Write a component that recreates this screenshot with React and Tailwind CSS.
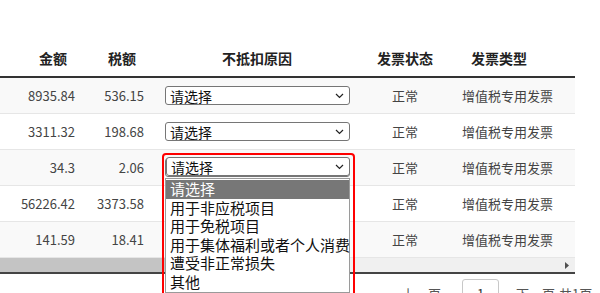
export default function App() {
  const rows = [
    ['8935.84', '536.15'],
    ['3311.32', '198.68'],
    ['34.3', '2.06'],
    ['56226.42', '3373.58'],
    ['141.59', '18.41'],
  ];
  const options = ['请选择', '用于非应税项目', '用于免税项目', '用于集体福利或者个人消费', '遭受非正常损失', '其他'];

  const Chevron = () => (
    <svg width="9" height="6" viewBox="0 0 9 6" className="shrink-0">
      <path d="M1 1 L4.5 4.5 L8 1" fill="none" stroke="#222" strokeWidth="1.2" />
    </svg>
  );

  const Select = () => (
    <div className="flex h-[19px] w-[185px] items-center justify-between rounded-[3px] border border-[#767676] bg-white pl-[4px] pr-[5px] text-[14px] leading-none text-[#111]">
      <span>请选择</span>
      <Chevron />
    </div>
  );

  return (
    <div className="relative h-[293px] w-[600px] overflow-hidden bg-white font-['Noto_Sans_CJK_SC',sans-serif]">
      <div className="w-[575px] pt-[40px]">
        <div className="flex h-[38px] items-center border-b-2 border-[#333] text-[14px] font-bold text-[#222]">
          <div className="w-[85px] pr-[18px] text-right">金额</div>
          <div className="w-[69px] pr-[18px] text-right">税额</div>
          <div className="w-[206px] text-center">不抵扣原因</div>
          <div className="w-[90px] text-center">发票状态</div>
          <div className="w-[125px] pl-[21px]">发票类型</div>
        </div>
        {rows.map((r, i) => (
          <div
            key={i}
            className={`flex h-[36px] items-center border-b border-[#e6e6e6] text-[13px] text-[#444] ${i % 2 === 0 ? 'bg-[#f9f9f9]' : 'bg-white'}`}
          >
            <div className="w-[85px] pr-[10px] text-right">{r[0]}</div>
            <div className="w-[69px] pr-[10px] text-right">{r[1]}</div>
            <div className="w-[206px] pl-[11px]">
              <Select />
            </div>
            <div className="w-[90px] text-center">正常</div>
            <div className="w-[125px] pl-[12px]">增值税专用发票</div>
          </div>
        ))}
        <div className="flex h-[14px] items-stretch">
          <div className="w-[350px] bg-[#c4c4c4]" />
          <div className="flex flex-1 items-center justify-end bg-[#f0f0f0] pr-[6px]">
            <svg width="4" height="7" viewBox="0 0 4 7">
              <path d="M0 0 L4 3.5 L0 7 Z" fill="#505050" />
            </svg>
          </div>
        </div>
        <div className="h-[2px] bg-[#444]" />
      </div>

      <div className="mt-[5px] flex items-start text-[13px] text-[#555]">
        <div className="w-[402px]" />
        <div className="pt-[7px] leading-[16px]">上一页</div>
        <div className="ml-[21px] flex h-[28px] w-[37px] items-start justify-center rounded-[3px] border border-[#c8c8c8] pt-[6px] leading-[16px] text-[#333]">
          1
        </div>
        <div className="ml-[17px] pt-[7px] leading-[16px]">下一页</div>
        <div className="ml-[4px] pt-[7px] leading-[16px]">共1页</div>
      </div>

      <div className="absolute left-[162px] top-[153px] h-[160px] w-[193px] rounded-[4px] border-2 border-[#ff0000]">
        <div className="ml-[2px] mt-[2px]">
          <div className="flex h-[19px] w-[184px] items-center justify-between rounded-[3px] border border-[#767676] bg-white pl-[4px] pr-[5px] text-[14px] leading-none text-[#111]">
            <span>请选择</span>
            <Chevron />
          </div>
        </div>
        <div className="ml-[1px] mt-[2px] w-[185px] border border-[#9a9a9a] bg-white pt-[1px] text-[15px] text-[#111]">
          {options.map((o, i) => (
            <div
              key={i}
              className={`h-[18.6px] pl-[4px] leading-[18.6px] whitespace-nowrap ${i === 0 ? 'bg-[#777777] text-white' : ''}`}
            >
              {o}
            </div>
          ))}
        </div>
      </div>
    </div>
  );
}
